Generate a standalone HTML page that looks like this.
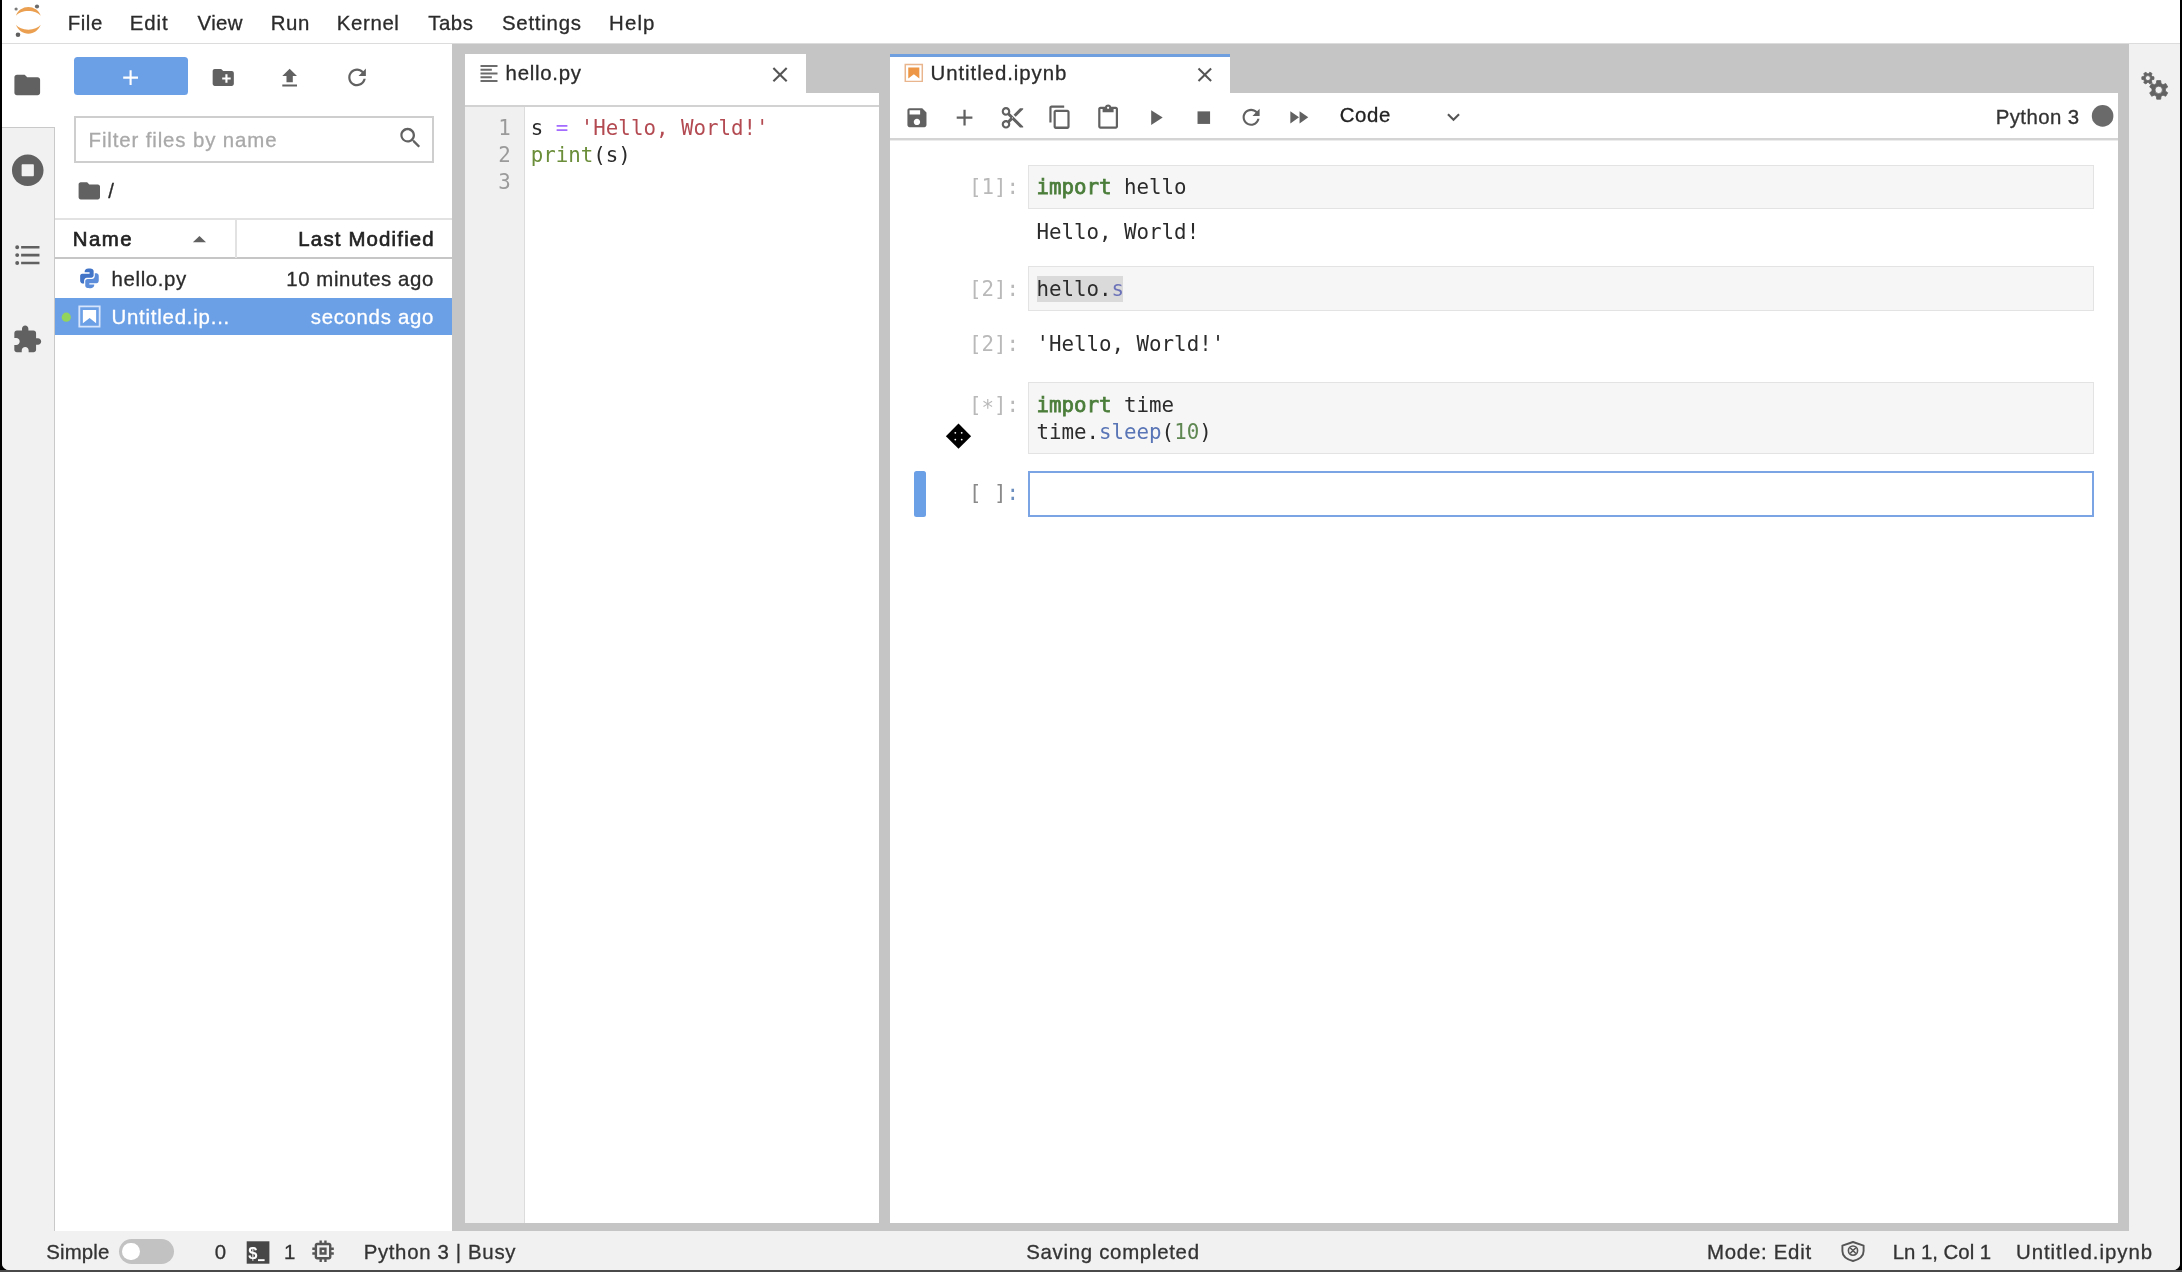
<!DOCTYPE html>
<html lang="en">
<head>
<meta charset="utf-8">
<title>JupyterLab</title>
<style>
*{box-sizing:border-box;margin:0;padding:0}
html,body{width:2182px;height:1272px;overflow:hidden;background:#000}
body{position:relative;font-family:"Liberation Sans",sans-serif;font-size:20px;color:#2a2a2a}
.abs{position:absolute}
.t{position:absolute;white-space:nowrap;line-height:24px;height:24px;-webkit-text-stroke-width:0.3px}
.t.mono{-webkit-text-stroke-width:0}
.mono{font-family:"DejaVu Sans Mono","Liberation Mono",monospace;font-size:20.8px;letter-spacing:0}
svg{position:absolute;display:block;overflow:visible}
#win{left:2px;top:0;width:2178px;height:1270px;background:#f1f1f1;border-radius:0 0 7px 7px;overflow:hidden}
#inner{left:-2px;top:0;width:2182px;height:1272px;will-change:transform}
#bottomedge{left:0;top:1270px;width:2182px;height:2px;background:#4a4a4a}
#menubar{left:0;top:0;width:2182px;height:42.6px;background:#fff}
#menuline{left:0;top:42.6px;width:2182px;height:1.8px;background:#dcdcdc}
#dock{left:452.3px;top:44.4px;width:1676.7px;height:1187.1px;background:#c5c5c5}
#sidebarL{left:0;top:44.4px;width:55px;height:1187.1px;background:#f1f1f1;border-right:1.5px solid #c9c9c9}
#sideactive{left:0;top:44.4px;width:55px;height:83.6px;background:#fff;border-bottom:1.5px solid #c9c9c9}
#fb{left:55px;top:44.4px;width:397.3px;height:1187.1px;background:#fff}
#sidebarR{left:2129px;top:44.4px;width:53px;height:1187.1px;background:#f1f1f1}
#status{left:0;top:1231.5px;width:2182px;height:39px;background:#f1f1f1}
</style>
</head>
<body>
<div id="win" class="abs"><div id="inner" class="abs">
  <div id="menubar" class="abs"></div>
  <div id="menuline" class="abs"></div>
  <div id="dock" class="abs"></div>
  <div id="fb" class="abs"></div>
  <div id="sidebarL" class="abs"></div>
  <div id="sideactive" class="abs"></div>
  <div id="sidebarR" class="abs"></div>
  <div id="status" class="abs"></div>
  <span class="t" style="left:67.67px;top:10.93px;font-size:20.4px;color:#2b2b2b;letter-spacing:0.601px;">File</span>
<span class="t" style="left:129.87px;top:10.93px;font-size:20.4px;color:#2b2b2b;letter-spacing:0.882px;">Edit</span>
<span class="t" style="left:197.60px;top:10.93px;font-size:20.4px;color:#2b2b2b;letter-spacing:0.381px;">View</span>
<span class="t" style="left:270.67px;top:10.93px;font-size:20.4px;color:#2b2b2b;letter-spacing:0.612px;">Run</span>
<span class="t" style="left:336.87px;top:10.93px;font-size:20.4px;color:#2b2b2b;letter-spacing:0.620px;">Kernel</span>
<span class="t" style="left:428.19px;top:10.93px;font-size:20.4px;color:#2b2b2b;letter-spacing:0.526px;">Tabs</span>
<span class="t" style="left:501.88px;top:10.93px;font-size:20.4px;color:#2b2b2b;letter-spacing:0.784px;">Settings</span>
<span class="t" style="left:609.07px;top:10.93px;font-size:20.4px;color:#2b2b2b;letter-spacing:1.142px;">Help</span>
  <div class="abs" style="left:73.70px;top:57.20px;width:113.90px;height:37.60px;background:#6b9fe6;border-radius:3.5px"></div>
<div class="abs" style="left:73.50px;top:116.40px;width:360.10px;height:47.00px;background:#fff;border:2px solid #cecece"></div>
<span class="t" style="left:88.57px;top:128.33px;font-size:20.4px;color:#a9a9a9;letter-spacing:0.884px;">Filter files by name</span>
<span class="t" style="left:108.30px;top:179.43px;font-size:20.4px;color:#2b2b2b;">/</span>
<div class="abs" style="left:55.00px;top:218.00px;width:397.00px;height:1.50px;background:#e2e2e2"></div>
<div class="abs" style="left:55.00px;top:257.30px;width:397.00px;height:1.60px;background:#c6c6c6"></div>
<div class="abs" style="left:235.00px;top:219.50px;width:1.50px;height:38.00px;background:#e2e2e2"></div>
<span class="t" style="left:72.77px;top:227.43px;font-size:20.4px;color:#222;letter-spacing:1.494px;-webkit-text-stroke:0.65px #222;">Name</span>
<span class="t" style="left:298.37px;top:227.43px;font-size:20.4px;color:#222;letter-spacing:1.173px;-webkit-text-stroke:0.65px #222;">Last Modified</span>
<span class="t" style="left:111.57px;top:266.53px;font-size:20.4px;color:#2b2b2b;letter-spacing:0.636px;">hello.py</span>
<span class="t" style="left:286.27px;top:266.53px;font-size:20.4px;color:#2b2b2b;letter-spacing:0.586px;">10 minutes ago</span>
<div class="abs" style="left:55.00px;top:298.00px;width:397.30px;height:36.60px;background:#6b9fe6"></div>
<span class="t" style="left:111.47px;top:305.43px;font-size:20.4px;color:#fff;letter-spacing:0.781px;">Untitled.ip...</span>
<span class="t" style="left:310.79px;top:305.43px;font-size:20.4px;color:#fff;letter-spacing:0.686px;">seconds ago</span>
<svg style="left:0;top:0" width="2182" height="1272" viewBox="0 0 2182 1272"><g transform="translate(11.83 69.58) scale(1.2850 1.2850)" fill="#616161" ><path d="M10 4H4c-1.1 0-1.99.9-1.99 2L2 18c0 1.1.9 2 2 2h16c1.1 0 2-.9 2-2V8c0-1.1-.9-2-2-2h-8l-2-2z"/></g>
<g transform="translate(11.44 153.94) scale(0.0637 0.0637)" fill="#616161" ><path d="M256 8C119 8 8 119 8 256s111 248 248 248 248-111 248-248S393 8 256 8zm96 328c0 8.8-7.2 16-16 16H176c-8.8 0-16-7.2-16-16V176c0-8.8 7.2-16 16-16h160c8.8 0 16 7.2 16 16v160z"/></g>
<g transform="translate(11.95 239.37) scale(1.3105 1.3105)" fill="#616161" ><path d="M7,5H21V7H7V5M7,13V11H21V13H7M4,4.5A1.5,1.5 0 0,1 5.5,6A1.5,1.5 0 0,1 4,7.5A1.5,1.5 0 0,1 2.5,6A1.5,1.5 0 0,1 4,4.5M4,10.5A1.5,1.5 0 0,1 5.5,12A1.5,1.5 0 0,1 4,13.5A1.5,1.5 0 0,1 2.5,12A1.5,1.5 0 0,1 4,10.5M7,19V17H21V19H7M4,16.5A1.5,1.5 0 0,1 5.5,18A1.5,1.5 0 0,1 4,19.5A1.5,1.5 0 0,1 2.5,18A1.5,1.5 0 0,1 4,16.5Z"/></g>
<g transform="translate(11.77 324.20) scale(1.2786 1.2786)" fill="#616161" ><path d="M20.5 11H19V7c0-1.1-.9-2-2-2h-4V3.5C13 2.12 11.88 1 10.5 1S8 2.12 8 3.5V5H4c-1.1 0-1.99.9-1.99 2v3.8H3.5c1.49 0 2.7 1.21 2.7 2.7s-1.21 2.7-2.7 2.7H2V20c0 1.1.9 2 2 2h3.8v-1.5c0-1.49 1.21-2.7 2.7-2.7 1.49 0 2.7 1.21 2.7 2.7V22H17c1.1 0 2-.9 2-2v-4h1.5c1.38 0 2.5-1.12 2.5-2.5S21.88 11 20.5 11z"/></g>
<g transform="translate(117.91 64.91) scale(1.0571 1.0571)" fill="#fff" ><path d="M19 13h-6v6h-2v-6H5v-2h6V5h2v6h6v2z"/></g>
<g transform="translate(210.54 64.74) scale(1.0594 1.0594)" fill="#616161" ><path d="M20 6h-8l-2-2H4c-1.11 0-1.99.89-1.99 2L2 18c0 1.11.89 2 2 2h16c1.11 0 2-.89 2-2V8c0-1.11-.89-2-2-2zm-1 8h-3v3h-2v-3h-3v-2h3V9h2v3h3v2z"/></g>
<g transform="translate(277.05 65.53) scale(1.0498 1.0498)" fill="#616161" ><path d="M9 16h6v-6h4l-7-7-7 7h4zm-4 2h14v2H5z"/></g>
<g transform="translate(343.81 64.16) scale(1.4708 1.4708)" fill="#616161" ><path d="M9 13.5c-2.49 0-4.5-2.01-4.5-4.5S6.51 4.5 9 4.5c1.24 0 2.36.52 3.17 1.33L10 8h5V3l-1.76 1.76C12.15 3.68 10.66 3 9 3 5.69 3 3.01 5.69 3.01 9S5.69 15 9 15c2.97 0 5.43-2.16 5.9-5h-1.52c-.46 2-2.24 3.5-4.38 3.5z"/></g>
<g transform="translate(397.88 125.38) scale(1.3699 1.3699)" fill="#616161" ><path d="M12.1,10.9h-0.7l-0.2-0.2c0.8-0.9,1.3-2.2,1.3-3.5c0-3-2.4-5.4-5.4-5.4S1.8,4.2,1.8,7.1s2.4,5.4,5.4,5.4c1.3,0,2.5-0.5,3.5-1.3l0.2,0.2v0.7l4.1,4.1l1.2-1.2L12.1,10.9z M7.1,10.9c-2.1,0-3.7-1.7-3.7-3.7s1.7-3.7,3.7-3.7s3.7,1.7,3.7,3.7S9.2,10.9,7.1,10.9z"/></g>
<g transform="translate(76.45 178.00) scale(1.0706 1.0706)" fill="#616161" ><path d="M10 4H4c-1.1 0-1.99.9-1.99 2L2 18c0 1.1.9 2 2 2h16c1.1 0 2-.9 2-2V8c0-1.1-.9-2-2-2h-8l-2-2z"/></g>
<path d="M192.9 242.3 L199.45 236 L206 242.3 Z" fill="#616161"/>
<g transform="translate(76.66 265.61) scale(1.1623 1.1623)" fill="#4b7fd0" ><g fill="#4173c6"><path d="M11.1 6.9V5.8H6.9c0-.5 0-1.3.2-1.6.4-.7.8-1.1 1.7-1.4 1.7-.3 2.5-.3 3.9-.1 1 .1 1.9.9 1.9 1.9v4.2c0 .5-.9 1.6-2 1.6H8.8c-1.5 0-2.4 1.4-2.4 2.8v2.2H4.7C3.5 15.1 3 14 3 13.1V9c-.1-1 .6-2 1.8-2 1.5-.1 6.3-.1 6.3-.1z"/></g><g fill="#5b8cda"><path d="M10.9 15.1v1.1h4.2c0 .5 0 1.3-.2 1.6-.4.7-.8 1.1-1.7 1.4-1.7.3-2.5.3-3.9.1-1-.1-1.9-.9-1.9-1.9v-4.2c0-.5.9-1.6 2-1.6h3.8c1.5 0 2.4-1.4 2.4-2.8V6.6h1.7C18.5 6.9 19 8 19 8.9V13c0 1-.7 2.1-1.9 2.1h-6.2z"/></g></g>
<circle cx="66.3" cy="317.2" r="4.6" fill="#93d45c"/>
<g transform="translate(76.25 303.31) scale(1.2043 1.2043)" fill="#fff" ><path d="M18.7 3.3v15.4H3.3V3.3h15.4m1.5-1.5H1.8v18.3h18.3l.1-18.3z" fill="#d6e5fb"/><path d="M16.5 16.5l-5.4-4.3-5.6 4.3v-11h11z" fill="#fff"/></g></svg>
  <div class="abs" style="left:464.60px;top:54.20px;width:341.60px;height:39.30px;background:#fff"></div>
<div class="abs" style="left:464.60px;top:93.30px;width:414.40px;height:1129.50px;background:#fff"></div>
<div class="abs" style="left:464.60px;top:105.20px;width:414.40px;height:2.00px;background:#d2d2d2"></div>
<div class="abs" style="left:464.60px;top:107.20px;width:60.90px;height:1115.60px;background:#f0f0f0;border-right:1.5px solid #dcdcdc"></div>
<span class="t" style="left:505.57px;top:60.93px;font-size:20.4px;color:#2b2b2b;letter-spacing:0.736px;">hello.py</span>
<span class="t mono" style="left:498.2px;top:115.60px;color:#9a9a9a">1</span>
<span class="t mono" style="left:498.2px;top:142.60px;color:#9a9a9a">2</span>
<span class="t mono" style="left:498.2px;top:169.60px;color:#9a9a9a">3</span>
<span class="t mono" style="left:530.7px;top:115.60px;color:#2b2b2b">s <span style="color:#a46bff">=</span> <span style="color:#b34a52">'Hello, World!'</span></span>
<span class="t mono" style="left:530.7px;top:142.60px;color:#2b2b2b"><span style="color:#6b8e3a">print</span>(s)</span>
<svg style="left:0;top:0" width="2182" height="1272" viewBox="0 0 2182 1272"><g transform="translate(477.67 62.17) scale(0.9444 0.9444)" fill="#6c6c6c" ><path d="M15 15H3v2h12v-2zm0-8H3v2h12V7zM3 13h18v-2H3v2zm0 8h18v-2H3v2zM3 3v2h18V3H3z"/></g>
<g transform="translate(767.36 61.96) scale(1.0571 1.0571)" fill="#555" ><path d="M19 6.41L17.59 5 12 10.59 6.41 5 5 6.41 10.59 12 5 17.59 6.41 19 12 13.41 17.59 19 19 17.59 13.41 12z"/></g></svg>
  <div class="abs" style="left:890.00px;top:54.20px;width:340.30px;height:39.30px;background:#fff"></div>
<div class="abs" style="left:890.00px;top:54.20px;width:340.30px;height:3.20px;background:#6f9fdf"></div>
<div class="abs" style="left:890.00px;top:93.30px;width:1228.40px;height:1129.50px;background:#fff"></div>
<div class="abs" style="left:890.00px;top:137.80px;width:1228.40px;height:2.00px;background:#d4d4d4"></div>
<div class="abs" style="left:890.00px;top:139.80px;width:1228.40px;height:1.50px;background:#ececec"></div>
<span class="t" style="left:930.47px;top:60.93px;font-size:20.4px;color:#2b2b2b;letter-spacing:0.948px;">Untitled.ipynb</span>
<span class="t" style="left:1339.78px;top:102.73px;font-size:20.4px;color:#222;letter-spacing:0.593px;">Code</span>
<span class="t" style="left:1995.67px;top:105.03px;font-size:20.4px;color:#333;letter-spacing:0.424px;">Python 3</span>
<div class="abs" style="left:1028.40px;top:165.10px;width:1065.80px;height:43.80px;background:#f6f6f6;border:1.5px solid #e3e3e3"></div>
<span class="t mono" style="left:969.0px;top:175.00px;color:#b9b9b9;">[1]:</span>
<span class="t mono" style="left:1036.4px;top:175.00px;color:#2b2b2b;"><span style="color:#4b7d3a;-webkit-text-stroke:0.75px #4b7d3a">import</span> hello</span>
<span class="t mono" style="left:1036.4px;top:220.00px;color:#2b2b2b;">Hello, World!</span>
<div class="abs" style="left:1028.40px;top:266.30px;width:1065.80px;height:45.00px;background:#f6f6f6;border:1.5px solid #e3e3e3"></div>
<div class="abs" style="left:1036.60px;top:275.80px;width:86.60px;height:26.50px;background:#dadada"></div>
<span class="t mono" style="left:969.0px;top:277.10px;color:#b9b9b9;">[2]:</span>
<span class="t mono" style="left:1036.4px;top:277.10px;color:#2b2b2b;">hello.<span style="color:#6c72b8">s</span></span>
<span class="t mono" style="left:969.0px;top:331.60px;color:#b9b9b9;">[2]:</span>
<span class="t mono" style="left:1036.4px;top:331.60px;color:#2b2b2b;">'Hello, World!'</span>
<div class="abs" style="left:1028.40px;top:382.30px;width:1065.80px;height:72.10px;background:#f6f6f6;border:1.5px solid #e3e3e3"></div>
<span class="t mono" style="left:969.0px;top:392.90px;color:#b9b9b9;">[<span style="position:relative;top:3.2px">*</span>]:</span>
<span class="t mono" style="left:1036.4px;top:392.90px;color:#2b2b2b;"><span style="color:#4b7d3a;-webkit-text-stroke:0.75px #4b7d3a">import</span> time</span>
<span class="t mono" style="left:1036.4px;top:419.60px;color:#2b2b2b;">time.<span style="color:#5975b6">sleep</span>(<span style="color:#5f8752">10</span>)</span>
<div class="abs" style="left:1028.40px;top:471.40px;width:1065.80px;height:45.20px;background:#fff;border:2px solid #7aa4e3"></div>
<div class="abs" style="left:913.90px;top:471.40px;width:12.10px;height:45.40px;background:#6b9fe6;border-radius:2.5px"></div>
<span class="t mono" style="left:969.0px;top:481.40px;color:#8a8a8a;">[ ]<span style="color:#6d8fc0">:</span></span>
<svg style="left:0;top:0" width="2182" height="1272" viewBox="0 0 2182 1272"><g transform="translate(902.71 61.86) scale(1.0081 1.0081)" fill="#f0883a" ><path d="M18.7 3.3v15.4H3.3V3.3h15.4m1.5-1.5H1.8v18.3h18.3l.1-18.3z" fill="#e8b58c"/><path d="M16.5 16.5l-5.4-4.3-5.6 4.3v-11h11z" fill="#ec9646"/></g>
<g transform="translate(1192.76 62.71) scale(1.0036 1.0036)" fill="#555" ><path d="M19 6.41L17.59 5 12 10.59 6.41 5 5 6.41 10.59 12 5 17.59 6.41 19 12 13.41 17.59 19 19 17.59 13.41 12z"/></g>
<g transform="translate(904.25 105.00) scale(1.0583 1.0583)" fill="#616161" ><path d="M17 3H5c-1.11 0-2 .9-2 2v14c0 1.1.89 2 2 2h14c1.1 0 2-.9 2-2V7l-4-4zm-5 16c-1.66 0-3-1.34-3-3s1.34-3 3-3 3 1.34 3 3-1.34 3-3 3zm3-10H5V5h10v4z"/></g>
<g transform="translate(951.09 104.09) scale(1.1214 1.1214)" fill="#616161" ><path d="M19 13h-6v6h-2v-6H5v-2h6V5h2v6h6v2z"/></g>
<g transform="translate(999.55 104.95) scale(1.0750 1.0750)" fill="#616161" ><path d="M9.64 7.64c.23-.5.36-1.05.36-1.64 0-2.21-1.79-4-4-4S2 3.79 2 6s1.79 4 4 4c.59 0 1.14-.13 1.64-.36L10 12l-2.36 2.36C7.14 14.13 6.59 14 6 14c-2.21 0-4 1.79-4 4s1.79 4 4 4 4-1.79 4-4c0-.59-.13-1.14-.36-1.64L12 14l7 7h3v-1L9.64 7.64zM6 8c-1.1 0-2-.89-2-2s.9-2 2-2 2 .89 2 2-.9 2-2 2zm0 12c-1.1 0-2-.89-2-2s.9-2 2-2 2 .89 2 2-.9 2-2 2zm6-7.5c-.28 0-.5-.22-.5-.5s.22-.5.5-.5.5.22.5.5-.22.5-.5.5zM19 3l-6 6 2 2 7-7V3z"/></g>
<g transform="translate(1046.88 104.03) scale(1.4555 1.4555)" fill="#616161" ><path d="M11.9,1H3.2C2.4,1,1.7,1.7,1.7,2.5v10.2h1.5V2.5h8.7V1z M14.1,3.9h-8c-0.8,0-1.5,0.7-1.5,1.5v10.2c0,0.8,0.7,1.5,1.5,1.5h8c0.8,0,1.5-0.7,1.5-1.5V5.4C15.5,4.6,14.9,3.9,14.1,3.9z M14.1,15.5h-8V5.4h8V15.5z"/></g>
<g transform="translate(1094.91 104.51) scale(1.0995 1.0995)" fill="#616161" ><path d="M19 2h-4.18C14.4.84 13.3 0 12 0c-1.3 0-2.4.84-2.82 2H5c-1.1 0-2 .9-2 2v16c0 1.1.9 2 2 2h14c1.1 0 2-.9 2-2V4c0-1.1-.9-2-2-2zm-7 0c.55 0 1 .45 1 1s-.45 1-1 1-1-.45-1-1 .45-1 1-1zm7 18H5V4h2v3h10V4h2v16z"/></g>
<g transform="translate(1142.81 105.03) scale(1.0474 1.0474)" fill="#616161" ><path d="M8 5v14l11-7z"/></g>
<g transform="translate(1191.25 105.10) scale(1.0458 1.0458)" fill="#616161" ><path d="M6 6h12v12H6z"/></g>
<g transform="translate(1238.31 104.56) scale(1.4208 1.4208)" fill="#616161" ><path d="M9 13.5c-2.49 0-4.5-2.01-4.5-4.5S6.51 4.5 9 4.5c1.24 0 2.36.52 3.17 1.33L10 8h5V3l-1.76 1.76C12.15 3.68 10.66 3 9 3 5.69 3 3.01 5.69 3.01 9S5.69 15 9 15c2.97 0 5.43-2.16 5.9-5h-1.52c-.46 2-2.24 3.5-4.38 3.5z"/></g>
<g transform="translate(1286.24 105.05) scale(1.0246 1.0246)" fill="#616161" ><path d="M4 18l8.5-6L4 6v12zm9-12v12l8.5-6L13 6z"/></g>
<g transform="translate(1440.93 104.47) scale(1.0477 1.0477)" fill="#555" ><path d="M7.41 8.59L12 13.17l4.59-4.58L18 10l-6 6-6-6 1.41-1.41z"/></g>
<circle cx="2102.6" cy="115.9" r="10.8" fill="#6a6a6a"/>
<g transform="translate(958.5 436.2)"><path d="M0 -12.6 L12.6 0 L0 12.6 L-12.6 0 Z" fill="#000"/><circle cx="-3.2" cy="-3.4" r="0.9" fill="#fff"/><circle cx="3.2" cy="-3.4" r="0.9" fill="#fff"/><circle cx="-3.2" cy="3.4" r="0.9" fill="#fff"/><circle cx="3.2" cy="3.4" r="0.9" fill="#fff"/></g></svg>
  <span class="t" style="left:46.28px;top:1239.53px;font-size:20.4px;color:#333;letter-spacing:0.162px;">Simple</span>
<div class="abs" style="left:118.50px;top:1238.90px;width:55.50px;height:25.60px;background:#c2c2c2;border-radius:13px"></div>
<div class="abs" style="left:122.20px;top:1242.90px;width:17.40px;height:17.40px;background:#fff;border-radius:50%"></div>
<span class="t" style="left:214.68px;top:1239.53px;font-size:20.4px;color:#333;">0</span>
<span class="t" style="left:284.07px;top:1239.53px;font-size:20.4px;color:#333;">1</span>
<span class="t" style="left:363.67px;top:1239.53px;font-size:20.4px;color:#333;letter-spacing:0.667px;">Python 3 | Busy</span>
<span class="t" style="left:1026.18px;top:1239.53px;font-size:20.4px;color:#333;letter-spacing:0.717px;">Saving completed</span>
<span class="t" style="left:1707.07px;top:1239.53px;font-size:20.4px;color:#333;letter-spacing:0.725px;">Mode: Edit</span>
<span class="t" style="left:1892.67px;top:1239.53px;font-size:20.4px;color:#333;letter-spacing:-0.008px;">Ln 1, Col 1</span>
<span class="t" style="left:2015.97px;top:1239.53px;font-size:20.4px;color:#333;letter-spacing:0.971px;">Untitled.ipynb</span>
<svg style="left:0;top:0" width="2182" height="1272" viewBox="0 0 2182 1272"><rect x="246.7" y="1241.3" width="22.7" height="22.4" fill="#474747"/>
<text x="248.3" y="1259.2" font-family="Liberation Sans, sans-serif" font-weight="700" font-size="16.5" fill="#fff">$</text>
<rect x="258" y="1259.2" width="6.6" height="1.9" fill="#fff"/>
<g transform="translate(308.72 1236.82) scale(1.1944 1.1944)" fill="#555" ><path d="M15 9H9v6h6V9zm-2 4h-2v-2h2v2zm8-2V9h-2V7c0-1.1-.9-2-2-2h-2V3h-2v2h-2V3H9v2H7c-1.1 0-2 .9-2 2v2H3v2h2v2H3v2h2v2c0 1.1.9 2 2 2h2v2h2v-2h2v2h2v-2h2c1.1 0 2-.9 2-2v-2h2v-2h-2v-2h2zm-4 6H7V7h10v10z"/></g>
<g fill="none" stroke="#555" stroke-width="1.9" stroke-linejoin="round" stroke-linecap="round"><path d="M1853 1242 L1863.6 1245.6 L1863.6 1251 C1863.6 1255.6 1859.3 1259.4 1853 1261 C1846.7 1259.4 1842.4 1255.6 1842.4 1251 L1842.4 1245.6 Z"/><circle cx="1853" cy="1250.6" r="4.6" stroke-width="1.6"/><path d="M1850.6 1248.2 L1855.4 1253 M1855.4 1248.2 L1850.6 1253" stroke-width="1.6"/></g>
<g transform="translate(15.9 6.8) scale(0.1632)" fill="#eaa050"><path transform="translate(0.04 0.7)" d="M75.98,24.63 C108.62,24.63 137.13,36.55 151.92,54.21 C146.41,38.37 136.14,24.64 122.53,14.93 C108.92,5.22 92.65,0 75.96,0 C59.27,0 43.0,5.22 29.39,14.93 C15.78,24.64 5.51,38.37 0,54.21 C14.83,36.59 43.34,24.63 75.98,24.63 Z"/><path transform="translate(0.08 110.58)" d="M75.94,29.58 C43.30,29.58 14.80,17.65 0,0 C5.51,15.84 15.78,29.57 29.39,39.28 C43.0,48.99 59.27,54.21 75.96,54.21 C92.65,54.21 108.92,48.99 122.53,39.28 C136.14,29.57 146.41,15.84 151.92,0 C137.09,17.65 108.58,29.58 75.94,29.58 Z"/></g>
<circle cx="37" cy="6.5" r="2.1" fill="#6b6b6b"/><circle cx="16.1" cy="9" r="1.6" fill="#7a7a7a"/><circle cx="18" cy="34.8" r="2.3" fill="#5f5f5f"/>
<path d="M2152.12 76.53 L2153.96 76.81 L2153.96 79.39 L2152.12 79.67 L2151.37 80.97 L2152.05 82.71 L2149.82 84.00 L2148.65 82.54 L2147.15 82.54 L2145.98 84.00 L2143.75 82.71 L2144.43 80.97 L2143.68 79.67 L2141.84 79.39 L2141.84 76.81 L2143.68 76.53 L2144.43 75.23 L2143.75 73.49 L2145.98 72.20 L2147.15 73.66 L2148.65 73.66 L2149.82 72.20 L2152.05 73.49 L2151.37 75.23 Z M2150.40 78.10 A2.5 2.5 0 1 0 2145.40 78.10 A2.5 2.5 0 1 0 2150.40 78.10 Z" fill="#636363" fill-rule="evenodd" stroke="#636363" stroke-width="0.8" stroke-linejoin="round"/>
<path d="M2161.07 96.27 L2160.68 99.19 L2156.72 99.19 L2156.33 96.27 L2154.37 95.14 L2151.64 96.26 L2149.66 92.84 L2152.00 91.03 L2152.00 88.77 L2149.66 86.96 L2151.64 83.54 L2154.37 84.66 L2156.33 83.53 L2156.72 80.61 L2160.68 80.61 L2161.07 83.53 L2163.03 84.66 L2165.76 83.54 L2167.74 86.96 L2165.40 88.77 L2165.40 91.03 L2167.74 92.84 L2165.76 96.26 L2163.03 95.14 Z M2162.40 89.90 A3.7 3.7 0 1 0 2155.00 89.90 A3.7 3.7 0 1 0 2162.40 89.90 Z" fill="#636363" fill-rule="evenodd" stroke="#636363" stroke-width="0.8" stroke-linejoin="round"/></svg>
</div></div>
<div id="bottomedge" class="abs"></div>
</body>
</html>
